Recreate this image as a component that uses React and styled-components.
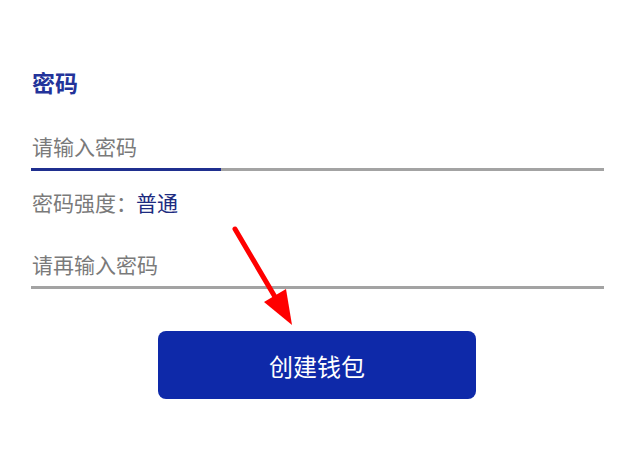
import React from "react";
import styled, { createGlobalStyle } from "styled-components";

const Global = createGlobalStyle`
  html, body { margin: 0; padding: 0; background: #fff; }
  body { font-family: "Noto Sans CJK SC", "Noto Sans", sans-serif; }
`;

const Page = styled.div`
  position: relative;
  width: 638px;
  height: 464px;
  box-sizing: border-box;
  padding: 65px 34px 0 31px;
  display: flex;
  flex-direction: column;
`;

const Title = styled.h2`
  margin: 0;
  font-size: 23px;
  line-height: 34px;
  font-weight: 700;
  color: #23339a;
  padding-left: 1px;
`;

const Field = styled.div`
  margin-top: ${(p) => p.$top}px;
  display: flex;
  flex-direction: column;
`;

const Input = styled.input`
  border: none;
  outline: none;
  background: transparent;
  font-family: inherit;
  font-size: 21px;
  line-height: 30px;
  height: 30px;
  padding: 0 0 0 1px;
  color: #333;
  &::placeholder { color: #7a7a7a; }
`;

const Track = styled.div`
  margin-top: ${(p) => p.$gap}px;
  height: 3px;
  background: #a3a3a3;
  display: flex;
`;

const Fill = styled.div`
  height: 3px;
  background: #1f2f8f;
`;

const Strength = styled.div`
  margin-top: 16px;
  font-size: 21px;
  line-height: 30px;
  color: #7a7a7a;
  padding-left: 1px;
`;

const Level = styled.span`
  color: #1c2b80;
  margin-left: -1px;
`;

const Button = styled.button`
  align-self: flex-start;
  margin: 42px 0 0 127px;
  width: 318px;
  height: 68px;
  border: none;
  border-radius: 8px;
  background: #0e29a9;
  color: #fff;
  font-family: inherit;
  font-size: 24px;
  cursor: pointer;
`;

const Arrow = styled.svg`
  position: absolute;
  left: 0;
  top: 0;
  pointer-events: none;
`;

export default function App() {
  return (
    <>
      <Global />
      <Page>
        <Title>密码</Title>
        <Field $top={32}>
          <Input type="password" placeholder="请输入密码" />
          <Track $gap={7}>
            <Fill style={{ width: `${(190 / 573) * 100}%` }} />
          </Track>
        </Field>
        <Strength>
          密码强度：<Level>普通</Level>
        </Strength>
        <Field $top={32}>
          <Input type="password" placeholder="请再输入密码" />
          <Track $gap={7} />
        </Field>
        <Button>创建钱包</Button>
        <Arrow width="638" height="464" viewBox="0 0 638 464">
          <line x1="235" y1="229" x2="278" y2="302" stroke="#f00" strokeWidth="5" strokeLinecap="round" />
          <polygon points="292,325 264,302 286,289" fill="#f00" />
        </Arrow>
      </Page>
    </>
  );
}
